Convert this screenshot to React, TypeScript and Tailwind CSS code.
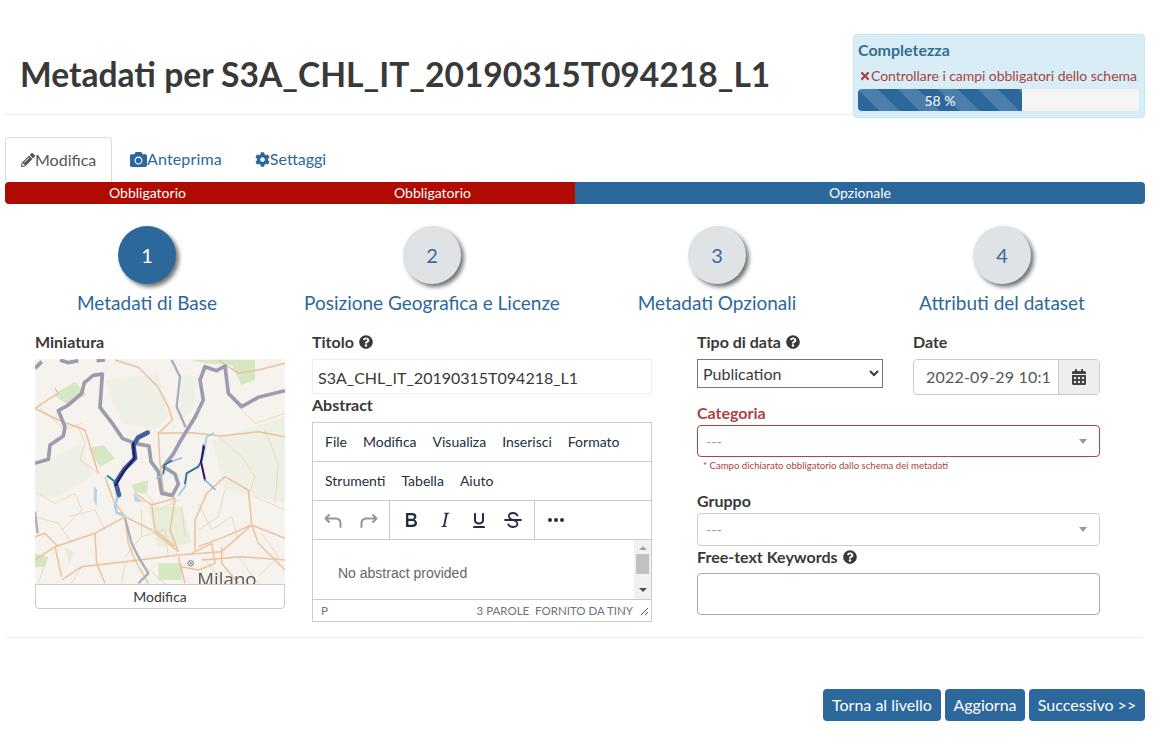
import { FaCalendarAlt, FaCamera, FaCog, FaPencilAlt, FaQuestionCircle, FaTimes } from 'react-icons/fa';

const STEPS = [
  { n: 1, label: 'Metadati di Base', active: true },
  { n: 2, label: 'Posizione Geografica e Licenze', active: false },
  { n: 3, label: 'Metadati Opzionali', active: false },
  { n: 4, label: 'Attributi del dataset', active: false },
];

const ACTIONS = [
  { label: 'Torna al livello', width: 'w-[118px]' },
  { label: 'Aggiorna', width: 'w-[80px]' },
  { label: 'Successivo >>', width: 'w-[116px]' },
];

const ROADS = [
  'M30 235 L60 215 L100 190 L90 175',
  'M270 90 L340 112 L400 172 L432 235 L442 270 L400 310 L405 400 L415 480 L450 505',
  'M400 310 L500 308 L590 318 L700 305 L780 320',
  'M580 90 L640 130 L700 120 L780 100',
  'M30 235 L100 270 L180 300 L220 430',
  'M300 560 L380 600 L460 665',
  'M300 560 L310 640 L330 690 L370 760',
  'M450 505 L435 600 L460 665',
  'M545 490 L510 570 L510 660',
  'M460 675 L300 695 L170 710 L110 750',
  'M460 675 L590 665 L680 585 L780 625',
  'M520 650 L600 620 L680 585',
  'M30 690 L90 650 L210 610 L300 560',
  'M210 610 L215 700 L240 760',
  'M590 650 L590 700 L640 760',
  'M530 690 L650 680 L780 690',
  'M460 680 L480 760',
  'M380 520 L390 600 L450 650',
  'M680 585 L700 640 L780 720',
  'M90 650 L110 740',
  'M30 620 L60 610 L100 650',
  'M240 440 L265 510 L300 560',
  'M450 505 L380 525 L330 490',
  'M545 490 L600 440 L670 480 L680 580',
  'M500 670 L560 640 L570 700 L520 720 L470 710',
];

const THIN_ROADS = [
  'M160 290 L180 340 L165 390 L220 430',
  'M40 490 L90 520 L150 490 L170 540 L110 600',
  'M580 320 L650 380 L690 440 L670 500',
  'M720 300 L760 400 L750 520',
  'M350 470 L400 540 L460 510',
  'M520 520 L560 600 L620 560 L640 630',
  'M640 230 L690 280 L780 250',
  'M40 230 L120 300 L170 280',
  'M350 620 L420 600 L430 680',
  'M540 690 L600 760',
  'M130 560 L210 540 L240 600',
  'M30 560 L100 580 L140 640',
  'M350 540 L350 620 L300 680',
  'M470 530 L480 620',
  'M600 480 L580 560 L520 600',
  'M690 500 L780 540',
  'M710 610 L760 680 L700 740',
  'M170 710 L140 760',
  'M60 700 L40 760',
  'M640 680 L700 760',
  'M300 700 L290 760',
  'M350 700 L420 760',
];

function MapThumb() {
  return (
    <div className="h-[225px] overflow-hidden">
      <svg viewBox="30 87 750 675" className="block w-[250px] h-[225px] bg-[#f6f3ef] blur-[0.4px]">
        {/* vegetation */}
        <g fill="#d6e7c4">
          <path d="M85 195 L150 155 L185 195 L130 225 Z" />
          <path d="M190 355 L235 345 L270 385 L225 410 Z" />
          <path d="M500 90 L690 90 L690 150 L650 165 L620 105 L540 100 Z" />
          <path d="M320 465 L370 450 L365 490 L330 490 Z" />
          <path d="M400 700 L470 700 L470 750 L400 750 Z" />
          <path d="M30 670 L70 680 L60 710 L30 710 Z" />
        </g>
        <g fill="#dfe9d3" fillOpacity="0.7">
          <path d="M370 530 L470 530 L500 640 L400 650 Z" />
          <path d="M120 650 L150 670 L130 700 Z" />
        </g>
        <g fill="#eef0e6">
          <path d="M240 150 L400 130 L430 260 L390 300 L290 280 Z" />
          <path d="M560 330 L780 260 L780 520 L600 480 Z" />
          <path d="M30 410 L170 340 L200 440 L100 500 L30 500 Z" />
          <path d="M470 130 L520 140 L500 250 L460 270 Z" />
        </g>
        {/* lakes */}
        <g fill="#b5d3ea">
          <path d="M207 470 L216 478 L215 530 L206 510 Z" />
          <path d="M325 490 L340 505 L355 515 L330 515 Z" />
        </g>
        <g fill="none" stroke="#efd6bd" strokeWidth="3" strokeLinejoin="round">
          {THIN_ROADS.map((d) => (
            <path key={d} d={d} />
          ))}
        </g>
        <g fill="none" stroke="#ecc29a" strokeWidth="4.500" strokeLinejoin="round">
          {ROADS.map((d) => (
            <path key={d} d={d} />
          ))}
        </g>
        {/* borders */}
        <g fill="none" stroke="#9b9dae" strokeWidth="11" strokeLinejoin="round">
          <path d="M30 115 L50 95 M105 90 L130 98 L160 92 M215 92 L240 90" />
          <path d="M30 400 L70 388 L75 345 L115 318 L120 290 L100 242 L130 225 L170 190 L178 158 L205 136 L232 132 L225 232 L262 280 L292 325 L330 340 L372 348 L378 395 L400 425 L410 490 L442 496 L460 462 L450 432 L415 410 L445 372 L462 340 L510 262 L535 210 L525 150 L540 110 L575 122 L600 108 L610 190 L650 230 L700 202 L780 182" />
        </g>
        <g fill="none" stroke="#a9adbd" strokeWidth="7" strokeLinejoin="round">
          <path d="M440 90 L465 140 L455 230 L482 292" />
          <path d="M30 545 L38 610 M300 565 L320 640 L340 680 L370 730 L340 760" />
        </g>
        {/* raster */}
        <g fill="none" strokeLinejoin="round" strokeLinecap="round">
          <path d="M368 308 L335 325 L325 345 L333 385 L300 415 L275 460 L280 495 L270 525 L275 548 L295 555" stroke="#b4cfe6" strokeWidth="9" />
          <path d="M368 308 L340 322 L325 345 L330 385 L300 415 L272 458 L282 495" stroke="#3f5f9e" strokeWidth="14" />
          <path d="M325 340 L328 385 L295 425 L272 465" stroke="#2a1a6a" strokeWidth="7" />
          <path d="M248 438 L270 455" stroke="#1a8a8a" strokeWidth="6" />
          <path d="M470 384 L420 402 L412 435 M395 445 L412 435" stroke="#8cbfe0" strokeWidth="5" />
          <path d="M440 392 L418 405 L416 430" stroke="#2b5c8e" strokeWidth="4" />
          <path d="M565 310 L545 320 L535 380 L525 405 L485 430 L480 470 L462 494" stroke="#a8cfe8" strokeWidth="6" />
          <path d="M535 345 L530 390 L520 410 L485 430 L480 460" stroke="#2b6a94" strokeWidth="5" />
          <path d="M537 350 L528 395 L540 450" stroke="#35106a" strokeWidth="6" />
          <path d="M540 450 L570 478" stroke="#7fb6d8" strokeWidth="5" />
        </g>
        <circle cx="497" cy="700" r="8" fill="#f6f3ef" stroke="#777" strokeWidth="3" />
        <circle cx="497" cy="700" r="3" fill="#777" />
        <text x="517" y="769" fill="#5a5a5a" fontSize="56" fontFamily="'Open Sans', sans-serif">
          Milano
        </text>
      </svg>
    </div>
  );
}

function Help() {
  return <FaQuestionCircle className="inline-block ml-[5px] text-[14px] text-[#393939] align-[-1px]" />;
}

function Tool({ d, stroke }: { d: string; stroke?: boolean }) {
  return (
    <svg viewBox="0 0 24 24" className="w-6 h-6">
      {stroke ? (
        <path d={d} fill="none" stroke="#222f3e" strokeOpacity="0.5" strokeWidth="2" strokeLinecap="round" strokeLinejoin="round" />
      ) : (
        <path d={d} fill="#222f3e" />
      )}
    </svg>
  );
}

function SelectBox({ error }: { error?: boolean }) {
  return (
    <div
      className={`flex items-center justify-between rounded border pl-[8px] pr-[12px] text-[14px] text-[#999] ${
        error ? 'h-[32px] border-[#a94442]' : 'h-[33px] border-[#ccc]'
      }`}
    >
      <span>---</span>
      <span className="w-0 h-0 border-x-[4px] border-x-transparent border-t-[5px] border-t-[#999]" />
    </div>
  );
}

export default function App() {
  return (
    <div className="w-[1159px] h-[737px] overflow-hidden bg-white pl-[5px] text-[#393939] font-['Lato',sans-serif] text-[16px]">
      <div className="w-[1140px]">
        {/* Header */}
        <div className="flex justify-between h-[115px] border-b border-[#eee] pl-[15px]">
          <h1 className="mt-[51px] text-[33.6px] leading-[46px] font-bold">
            Metadati per S3A_CHL_IT_20190315T094218_L1
          </h1>
          <div className="relative mt-[34px] h-[84px] w-[292px] rounded border border-[#bce8f1] bg-[#d9edf7] px-[4px]">
            <div className="mt-[5px] text-[16px] leading-[20px] font-bold text-[#31708f]">Completezza</div>
            <div className="mt-[7px] flex items-center text-[14px] leading-[18px] text-[#a94442] whitespace-nowrap pl-[2px]">
              <FaTimes className="text-[12px] shrink-0 -ml-px" />
              <span className="tracking-[-0.05px]">Controllare i campi obbligatori dello schema</span>
            </div>
            <div className="mt-[4px] h-[22px] w-[281px] rounded bg-[#f5f5f5] overflow-hidden">
              <div className="flex h-full w-[164px] items-center justify-center bg-[#2c689c] bg-[linear-gradient(45deg,rgba(255,255,255,.15)_25%,transparent_25%,transparent_50%,rgba(255,255,255,.15)_50%,rgba(255,255,255,.15)_75%,transparent_75%,transparent)] bg-[length:40px_40px] text-[14px] text-white">
                58 %
              </div>
            </div>
          </div>
        </div>

        {/* Tabs */}
        <div className="mt-[22px] flex h-[45px] text-[16px] text-[#2c689c]">
          <div className="flex items-center w-[107px] pl-[15px] pb-px rounded-t border border-b-0 border-[#ddd] text-[#555]">
            <FaPencilAlt className="text-[14px]" />
            Modifica
          </div>
          <div className="flex items-center pl-[18px] pb-px">
            <FaCamera className="text-[17px]" />
            <span className="tracking-[0.15px]">Anteprima</span>
          </div>
          <div className="flex items-center pl-[33px] pb-px">
            <FaCog className="text-[15px]" />
            Settaggi
          </div>
        </div>

        {/* Section bar */}
        <div className="flex h-[22px] rounded overflow-hidden text-[14px] leading-[22px] text-white text-center">
          <div className="w-[285px] bg-[#b00b00]">Obbligatorio</div>
          <div className="w-[285px] bg-[#b00b00]">Obbligatorio</div>
          <div className="w-[570px] bg-[#2c689c]">Opzionale</div>
        </div>

        {/* Steps */}
        <div className="mt-[22px] grid grid-cols-4">
          {STEPS.map((s) => (
            <div key={s.n} className="flex flex-col items-center pr-px">
              <div
                className={`flex h-[58px] w-[58px] items-center justify-center rounded-full text-[20px] shadow-[3px_3px_4px_rgba(0,0,0,.55)] ${
                  s.active ? 'bg-[#2c689c] text-white' : 'bg-[#dfe3e6] text-[#3c689c]'
                }`}
              >
                {s.n}
              </div>
              <div className="mt-[7px] text-[19px] leading-[23px] text-[#2c689c] whitespace-nowrap">{s.label}</div>
            </div>
          ))}
        </div>

        {/* Form */}
        <div className="mt-[17px] flex h-[307px] items-start border-b border-[#eee] rounded-b pl-[30px]">
          {/* Thumbnail */}
          <div className="w-[250px]">
            <div className="h-[22px] font-bold leading-[22px]">Miniatura</div>
            <div className="mt-[6px]">
              <MapThumb />
            </div>
            <div className="h-[25px] rounded-b border border-[#ccc] text-center text-[14px] leading-[24px]">Modifica</div>
          </div>

          {/* Title and abstract */}
          <div className="ml-[27px] w-[340px]">
            <div className="h-[22px] font-bold leading-[22px]">
              Titolo
              <Help />
            </div>
            <div className="mt-[6px] h-[35px] border border-[#eee] pl-[5px] leading-[35px]">S3A_CHL_IT_20190315T094218_L1</div>
            <div className="mt-[1px] h-[20px] font-bold leading-[20px]">Abstract</div>
            <div className="mt-[7px] h-[200px] border border-[#ccc] text-[14px] text-[#222f3e]">
              <div className="flex h-[39px] items-center gap-[16px] border-b border-[#ccc] pl-[12px] pb-px">
                <span>File</span>
                <span>Modifica</span>
                <span>Visualiza</span>
                <span>Inserisci</span>
                <span>Formato</span>
              </div>
              <div className="flex h-[39px] items-center gap-[16px] border-b border-[#ccc] pl-[12px] pb-px">
                <span>Strumenti</span>
                <span>Tabella</span>
                <span>Aiuto</span>
              </div>
              <div className="flex h-[39px] items-center border-b border-[#ccc]">
                <div className="flex h-full w-[77px] items-center gap-[12px] border-r border-[#ccc] pl-[8px]">
                  <Tool stroke d="M8 7 L4.5 10.5 L8 14 M5 10.5 H15 a4.5 4.5 0 0 1 4.5 4.5 V19" />
                  <Tool stroke d="M16 7 L19.5 10.5 L16 14 M19 10.5 H9 a4.5 4.5 0 0 0 -4.5 4.5 V19" />
                </div>
                <div className="flex h-full w-[145px] items-center gap-[10px] border-r border-[#ccc] pl-[9px]">
                  <Tool d="M7.8 19c-.3 0-.5 0-.6-.2l-.2-.5V5.7c0-.2 0-.4.2-.5l.6-.2h5c1.5 0 2.7.3 3.5 1 .7.6 1.1 1.4 1.1 2.5a3 3 0 0 1-.6 1.9c-.4.6-1 1-1.6 1.2.4.1.9.3 1.3.6s.8.7 1 1.2c.4.4.5 1 .5 1.6 0 1.3-.4 2.3-1.3 3-.8.7-2.1 1-3.8 1H7.8zm5-8.3c.6 0 1.2-.1 1.6-.5.4-.3.6-.7.6-1.3 0-1.1-.8-1.7-2.4-1.7H9.3v3.5h3.4zm.5 6c.7 0 1.3-.1 1.7-.4.4-.4.6-.9.6-1.5s-.2-1-.7-1.4c-.4-.3-1-.4-2-.4H9.4v3.8h4z" />
                  <Tool d="M16.7 4.7l-.1.9h-.3c-.6 0-1 0-1.4.3-.3.3-.4.6-.5 1.1l-2.1 9.8v.6c0 .5.4.8 1.4.8h.2l-.2.8H8l.2-.8h.2c1.1 0 1.8-.5 2-1.5l2-9.8.1-.5c0-.6-.4-.8-1.4-.8h-.3l.2-.9h5.8z" />
                  <Tool d="M16 5c.6 0 1 .4 1 1v6c0 2.8-2.2 4.5-5 4.5S7 14.800 7 12V6c0-.6.4-1 1-1s1 .4 1 1v6c0 1.700 1.300 2.500 3 2.500s3-.8 3-2.500V6c0-.6.4-1 1-1zM7 18h10c.6 0 1 .4 1 1s-.4 1-1 1H7a1 1 0 1 1 0-2z" />
                  <svg viewBox="0 0 24 24" className="w-6 h-6">
                    <path d="M16.500 7.500C15.500 5.800 13.800 5 12 5 9.500 5 7.800 6.300 7.800 8.300c0 1.700 1.200 2.700 4.200 3.700 3 1 4.400 2 4.400 3.800 0 2-1.900 3.200-4.400 3.200-2 0-3.800-.9-4.800-2.600" fill="none" stroke="#222f3e" strokeWidth="1.800" strokeLinecap="round" />
                    <path d="M4 12 H20" stroke="#222f3e" strokeWidth="1.800" strokeLinecap="round" />
                  </svg>
                </div>
                <div className="pl-[9px]">
                  <Tool d="M6 10a2 2 0 1 0 0 4 2 2 0 0 0 0-4zm6 0a2 2 0 1 0 0 4 2 2 0 0 0 0-4zm6 0a2 2 0 1 0 0 4 2 2 0 0 0 0-4z" />
                </div>
              </div>
              <div className="flex h-[60px] border-b border-[#ccc]">
                <div className="flex-1 pl-[25px] pt-[24px] font-['Liberation_Sans',sans-serif] text-[14px] leading-[18px] text-[#666]">
                  No abstract provided
                </div>
                <div className="flex w-[17px] flex-col items-center bg-[#f1f1f1]">
                  <span className="mt-[6px] h-0 w-0 border-x-[4px] border-x-transparent border-b-[4px] border-b-[#a3a3a3]" />
                  <span className="mt-[4px] h-[20px] w-[13px] bg-[#c1c1c1]" />
                  <span className="mt-[14px] h-0 w-0 border-x-[4px] border-x-transparent border-t-[4px] border-t-[#505050]" />
                </div>
              </div>
              <div className="flex h-[21px] items-center justify-between pl-[8px] pr-[2px] text-[11.5px] text-[#6a7482]">
                <span>P</span>
                <span className="flex items-center whitespace-nowrap">
                  3 PAROLE&nbsp;&nbsp;FORNITO DA TINY
                  <svg viewBox="0 0 10 10" className="ml-[6px] h-[10px] w-[10px]">
                    <path d="M9 2 L2 9 M9 6 L6 9" stroke="#555" strokeWidth="1" />
                  </svg>
                </span>
              </div>
            </div>
          </div>

          {/* Right column */}
          <div className="ml-[45px] w-[403px]">
            <div className="flex">
              <div className="w-[216px]">
                <div className="h-[22px] font-bold leading-[22px]">
                  Tipo di data
                  <Help />
                </div>
                <select
                  defaultValue="Publication"
                  className="mt-[6px] block h-[29px] w-[186px] rounded-none border border-[#767676] bg-white pl-[1px] text-[16px] text-[#393939] appearance-auto"
                >
                  <option>Publication</option>
                </select>
              </div>
              <div className="w-[187px]">
                <div className="h-[22px] font-bold leading-[22px]">Date</div>
                <div className="mt-[6px] flex h-[36px] rounded border border-[#ccc]">
                  <div className="flex-1 pl-[12px] text-[16px] leading-[34px] text-[#555] tracking-[0.2px] whitespace-nowrap overflow-hidden">
                    2022-09-29 10:1
                  </div>
                  <div className="flex w-[41px] items-center justify-center border-l border-[#ccc] bg-[#eee]">
                    <FaCalendarAlt className="text-[16px] text-[#444]" />
                  </div>
                </div>
              </div>
            </div>
            <div className="mt-[7px] h-[22px] font-bold leading-[22px] text-[#a94442]">Categoria</div>
            <div className="mt-px">
              <SelectBox error />
            </div>
            <div className="mt-[3px] h-[12px] pl-[6px] text-[9.6px] leading-[12px] text-[#a94442] whitespace-nowrap">
              * Campo dichiarato obbligatorio dallo schema dei metadati
            </div>
            <div className="mt-[18px] h-[22px] font-bold leading-[22px]">Gruppo</div>
            <div className="mt-px">
              <SelectBox />
            </div>
            <div className="h-[22px] font-bold leading-[22px]">
              Free-text Keywords
              <Help />
            </div>
            <div className="mt-[5px] h-[42px] rounded border border-[#aaa]" />
          </div>
        </div>

        {/* Actions */}
        <div className="mt-[51px] flex justify-end gap-[4px] text-[16px]">
          {ACTIONS.map((a) => (
            <button key={a.label} className={`h-[32px] rounded bg-[#2c689c] text-white ${a.width}`}>
              {a.label}
            </button>
          ))}
        </div>
      </div>
    </div>
  );
}
